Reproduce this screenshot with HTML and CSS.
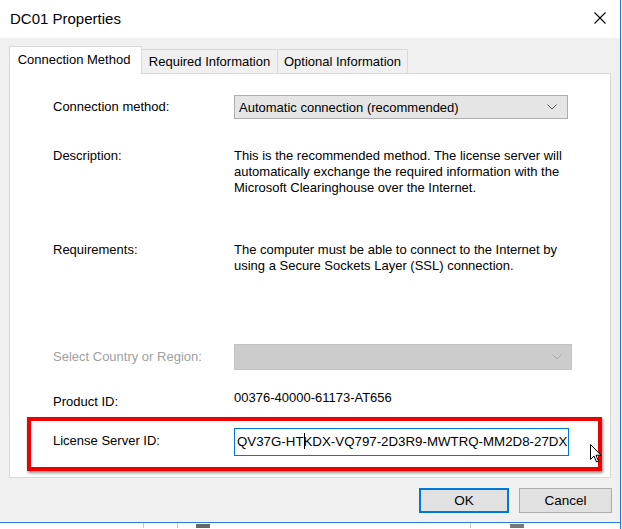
FILE: index.html
```html
<!DOCTYPE html>
<html>
<head>
<meta charset="utf-8">
<link rel="stylesheet" href="styles.css">
</head>
<body>
<div class="window">
  <div class="titlebar">
    <span class="title">DC01 Properties</span>
    <svg class="close" width="12" height="12" viewBox="0 0 12 12"><path d="M0.5 0.5 L11.5 11.5 M11.5 0.5 L0.5 11.5" stroke="#000" stroke-width="1.1" fill="none"/></svg>
  </div>
  <div class="client">
    <div class="tabs">
      <div class="tab active">Connection Method</div>
      <div class="tab">Required Information</div>
      <div class="tab">Optional Information</div>
    </div>
    <div class="panel">
      <div class="row row-method">
        <div class="label">Connection method:</div>
        <div class="select">
          <span>Automatic connection (recommended)</span>
          <svg class="chev" width="10" height="6" viewBox="0 0 10 6"><path d="M0.5 0.5 L5 5 L9.5 0.5" stroke="#555" stroke-width="1" fill="none"/></svg>
        </div>
      </div>
      <div class="row row-desc">
        <div class="label">Description:</div>
        <div class="text">This is the recommended method. The license server will<br>automatically exchange the required information with the<br>Microsoft Clearinghouse over the Internet.</div>
      </div>
      <div class="row row-req">
        <div class="label">Requirements:</div>
        <div class="text">The computer must be able to connect to the Internet by<br>using a Secure Sockets Layer (SSL) connection.</div>
      </div>
      <div class="row row-country">
        <div class="label disabled">Select Country or Region:</div>
        <div class="select select-disabled">
          <span></span>
          <svg class="chev" width="10" height="6" viewBox="0 0 10 6"><path d="M0.5 0.5 L5 5 L9.5 0.5" stroke="#a8a8a8" stroke-width="1" fill="none"/></svg>
        </div>
      </div>
      <div class="row row-product">
        <div class="label">Product ID:</div>
        <div class="value">00376-40000-61173-AT656</div>
      </div>
      <div class="highlight">
        <div class="row row-license">
          <div class="label">License Server ID:</div>
          <div class="textbox"><span>QV37G-HT<span class="caret"></span>KDX-VQ797-2D3R9-MWTRQ-MM2D8-27DX</span></div>
        </div>
        <svg class="pointer" width="12" height="19" viewBox="0 0 12 19"><path d="M0.5 0.5 L0.5 15.5 L4 12 L6.5 18 L8.5 17 L6 11.2 L11 11.2 Z" fill="#fff" stroke="#000" stroke-width="1"/></svg>
      </div>
    </div>
    <div class="buttons">
      <div class="btn default">OK</div>
      <div class="btn">Cancel</div>
    </div>
  </div>
  <div class="taskbar">
    <span class="tb-sep s1"></span>
    <span class="tb-sep s2"></span>
    <span class="tb-icon i1"></span>
    <span class="tb-sep s3"></span>
    <span class="tb-icon i2"></span>
  </div>
</div>
</body>
</html>
```
FILE: styles.css
```css
html, body {
  margin: 0;
  padding: 0;
  background: #fff;
}
body {
  font-family: "Liberation Sans", Arial, sans-serif;
  font-size: 13px;
  color: #000;
}
.window {
  width: 620px;
  height: 529px;
  border-right: 1px solid #1c7ad6;
  display: flex;
  flex-direction: column;
  overflow: hidden;
}
.titlebar {
  height: 38px;
  background: #fff;
  display: flex;
  align-items: center;
  justify-content: space-between;
  padding: 0 14px 0 10px;
  flex: none;
}
.title {
  font-size: 15px;
  color: #000;
  margin-top: -1px;
}
.close {
  margin-top: -3px;
}
.client {
  background: #f0f0f0;
  height: 485px;
  border-bottom: 1px solid #2b7fd0;
  padding: 8px 0 0 9px;
  box-sizing: border-box;
  flex: none;
}
.tabs {
  display: flex;
  align-items: flex-end;
  height: 27px;
  position: relative;
  z-index: 1;
}
.tab {
  height: 24px;
  box-sizing: border-box;
  border: 1px solid #d9d9d9;
  border-bottom: none;
  border-left: none;
  background: #f0f0f0;
  padding: 0;
  line-height: 24px;
  font-size: 13px;
  color: #000;
  white-space: nowrap;
  text-align: center;
}
.tab.active {
  height: 28px;
  margin-bottom: -1px;
  background: #fff;
  border-left: 1px solid #d9d9d9;
  line-height: 26px;
  width: 133px;
  padding-right: 3px;
}
.tab:nth-child(2) { width: 136px; }
.tab:nth-child(3) { width: 130px; }
.panel {
  width: 602px;
  height: 405px;
  box-sizing: border-box;
  background: #fff;
  border: 1px solid #d9d9d9;
  padding: 0 0 0 43px;
  position: relative;
}
.row {
  display: grid;
  grid-template-columns: 181px auto;
  align-items: start;
}
.label {
  line-height: 16px;
  color: #000;
}
.label.disabled { color: #a0a0a0; }
.text {
  line-height: 16px;
  font-size: 13px;
}
.select {
  box-sizing: border-box;
  height: 24px;
  width: 334px;
  background: #e5e5e5;
  border: 1px solid #adadad;
  display: flex;
  align-items: center;
  justify-content: space-between;
  padding: 0 10px 0 4px;
}
.row-method { margin-top: 21px; }
.row-method .label { margin-top: 4px; }
.row-desc { margin-top: 29px; }
.row-req { margin-top: 46px; }
.row-country { margin-top: 70px; }
.row-country .label { margin-top: 5px; }
.select-disabled {
  height: 26px;
  width: 338px;
  background: #cccccc;
  border-color: #c4c4c4;
  padding-right: 9px;
}
.row-product { margin-top: 24px; }
.row-product .value {
  line-height: 16px;
  margin-top: -4px;
}
.highlight {
  margin: 7px 0 0 -26px;
  width: 575px;
  height: 54px;
  box-sizing: border-box;
  border: 4px solid #ee0000;
  box-shadow: 1px 2px 3px rgba(0, 0, 0, 0.45);
  padding: 7px 0 0 22px;
  position: relative;
}
.row-license .label { margin-top: 5px; }
.textbox {
  width: 335px;
  height: 28px;
  box-sizing: border-box;
  border: 1px solid #0078d7;
  background: #fff;
  overflow: hidden;
  white-space: nowrap;
  line-height: 26px;
  padding-left: 2px;
  font-size: 13.3px;
}
.caret {
  display: inline-block;
  width: 1px;
  height: 16px;
  background: #000;
  vertical-align: -3px;
  margin: 0 -1px 0 0;
}
.pointer {
  position: absolute;
  left: 559px;
  top: 23px;
}
.buttons {
  display: flex;
  justify-content: flex-end;
  gap: 10px;
  margin-top: 10px;
  padding-right: 8px;
}
.btn {
  box-sizing: border-box;
  height: 25px;
  width: 93px;
  background: #e1e1e1;
  border: 1px solid #adadad;
  text-align: center;
  line-height: 23px;
  font-size: 13.5px;
}
.btn.default {
  width: 90px;
  border: 2px solid #0078d7;
  line-height: 21px;
}
.taskbar {
  height: 5px;
  background: #fff;
  position: relative;
  flex: none;
}
.tb-sep {
  position: absolute;
  top: 0;
  width: 1px;
  height: 5px;
  background: #c8c8c8;
}
.s1 { left: 143px; }
.s2 { left: 177px; }
.s3 { left: 470px; }
.tb-icon {
  position: absolute;
  top: 1px;
  height: 4px;
  background: #666;
}
.i1 { left: 196px; width: 14px; }
.i2 { left: 510px; width: 14px; background: #777; }
```
